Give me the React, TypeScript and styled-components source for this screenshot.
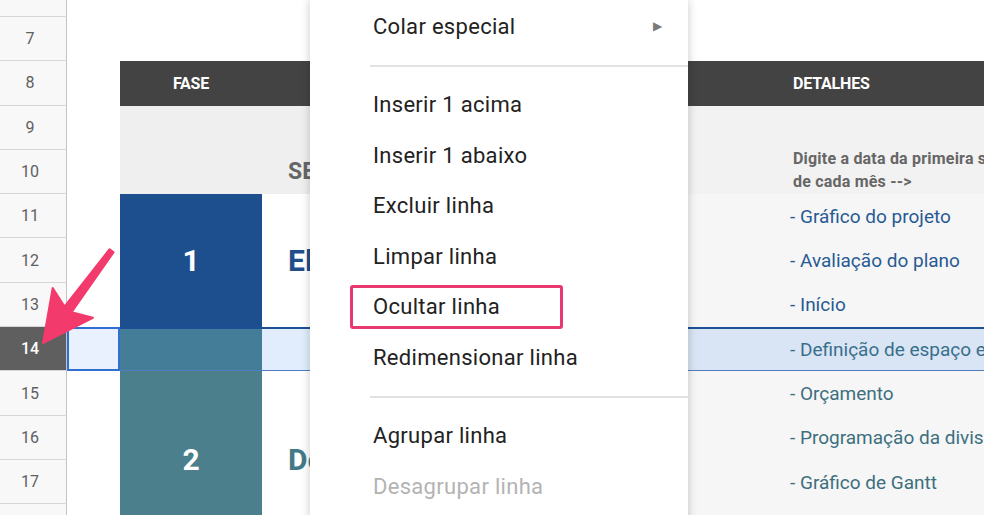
import React from 'react';
import styled, { createGlobalStyle } from 'styled-components';

const GlobalStyle = createGlobalStyle`
  html, body {
    margin: 0;
    padding: 0;
    background: #ffffff;
  }
  body {
    font-family: Roboto, "Liberation Sans", Arial, sans-serif;
    overflow: hidden;
  }
`;

// sheet row n sits on grid row n - 5 (row 6 is the cut-off one at the top)
const g = (row: number) => row - 5;

const Screen = styled.div`
  position: relative;
  width: 984px;
  height: 515px;
  overflow: hidden;
  background: #fff;
`;

// columns: row numbers, A, B (fase), C (visible sliver left of the menu), hidden, D (detalhes)
const Sheet = styled.div`
  display: grid;
  grid-template-columns: 67px 53px 142px 48px 470px 420px;
  grid-template-rows: 17px repeat(13, 44.3px);
`;

const RowHead = styled.div<{ $row: number; $active?: boolean }>`
  grid-column: 1;
  grid-row: ${p => g(p.$row)};
  box-sizing: border-box;
  display: flex;
  align-items: center;
  justify-content: center;
  padding-right: 6px;
  font-size: 16px;
  color: ${p => (p.$active ? '#ffffff' : '#5f5f5f')};
  font-weight: ${p => (p.$active ? 500 : 400)};
  background: ${p => (p.$active ? '#5f5f5f' : '#f8f8f8')};
  border-bottom: 1px solid #d6d6d6;
  border-right: 1px solid #c4c4c4;
  overflow: hidden;
`;

const HeaderCell = styled.div<{ $col: string; $center?: boolean }>`
  grid-row: ${g(8)};
  grid-column: ${p => p.$col};
  background: #434343;
  color: #ffffff;
  font-weight: 700;
  font-size: 16px;
  letter-spacing: -0.2px;
  display: flex;
  align-items: center;
  justify-content: ${p => (p.$center ? 'center' : 'flex-start')};
  padding-left: ${p => (p.$center ? '0' : '13px')};
`;

const BandCell = styled.div<{ $col: string; $bg: string }>`
  grid-row: ${g(9)} / span 2;
  grid-column: ${p => p.$col};
  background: ${p => p.$bg};
  display: flex;
  flex-direction: column;
  justify-content: flex-end;
  overflow: hidden;
  white-space: nowrap;
`;

const BandTitle = styled.span`
  font-size: 23px;
  font-weight: 700;
  color: #666666;
  line-height: 28px;
  padding: 0 0 8px 26px;
`;

const BandNote = styled.span`
  font-size: 16px;
  font-weight: 700;
  color: #666666;
  line-height: 22px;
  letter-spacing: 0.2px;
  padding: 0 0 1px 13px;
`;

const PhaseCell = styled.div<{ $row: number; $span: number; $bg: string }>`
  grid-column: 3;
  grid-row: ${p => g(p.$row)} / span ${p => p.$span};
  background: ${p => p.$bg};
  color: #ffffff;
  font-size: 30px;
  font-weight: 700;
  display: flex;
  align-items: center;
  justify-content: center;
`;

const TitleCell = styled.div<{ $row: number; $span: number; $color: string }>`
  grid-column: 4;
  grid-row: ${p => g(p.$row)} / span ${p => p.$span};
  color: ${p => p.$color};
  font-size: 30px;
  font-weight: 700;
  display: flex;
  align-items: center;
  padding-left: 26px;
  white-space: nowrap;
  overflow: hidden;
`;

const DetailCell = styled.div<{ $row: number; $color: string }>`
  grid-column: 6;
  grid-row: ${p => g(p.$row)};
  background: #f6f6f6;
  color: ${p => p.$color};
  font-size: 19px;
  display: flex;
  align-items: center;
  padding-left: 10px;
  white-space: nowrap;
`;

const GreyFill = styled.div<{ $col: number; $from: number; $to: number }>`
  grid-column: ${p => p.$col};
  grid-row: ${p => g(p.$from)} / ${p => g(p.$to) + 1};
  background: #f6f6f6;
`;

const Selection = styled.div`
  grid-column: 2 / -1;
  grid-row: ${g(14)};
  z-index: 1;
  box-sizing: border-box;
  background: rgba(26, 115, 232, 0.13);
  border-top: 2px solid #1d4f97;
  border-bottom: 1px solid #4f7fc2;
`;

const ActiveCell = styled.div`
  grid-column: 2;
  grid-row: ${g(14)};
  z-index: 2;
  box-sizing: border-box;
  border: 2px solid #2f6fd2;
  background: rgba(255, 255, 255, 0.25);
`;

const Menu = styled.div`
  position: absolute;
  left: 310px;
  top: 0;
  width: 378px;
  height: 530px;
  z-index: 5;
  background: #ffffff;
  box-shadow: 0 0 9px rgba(0, 0, 0, 0.22);
  padding-top: 1px;
  box-sizing: border-box;
  font-size: 22px;
  letter-spacing: 0.3px;
`;

const MenuItem = styled.div<{ $disabled?: boolean }>`
  position: relative;
  height: 50.5px;
  display: flex;
  align-items: center;
  justify-content: space-between;
  padding: 0 26px 0 63px;
  color: ${p => (p.$disabled ? '#b3b3b3' : '#222222')};
`;

const SubArrow = styled.span`
  font-size: 12px;
  color: #7a7a7a;
`;

const Separator = styled.div`
  height: 2px;
  margin: 13px 0 13px 60px;
  background: #e2e2e2;
`;

const Highlight = styled.div`
  position: absolute;
  left: 40px;
  top: 3px;
  width: 213px;
  height: 44px;
  box-sizing: border-box;
  border: 3px solid #e8386f;
  border-radius: 3px;
`;

const Pointer = styled.svg`
  position: absolute;
  left: 30px;
  top: 240px;
  z-index: 6;
`;

const BLUE_TEXT = '#285a94';
const TEAL_TEXT = '#3d6f7e';

const details = [
  { row: 11, text: '- Gráfico do projeto', color: BLUE_TEXT },
  { row: 12, text: '- Avaliação do plano', color: BLUE_TEXT },
  { row: 13, text: '- Início', color: BLUE_TEXT },
  { row: 14, text: '- Definição de espaço e tarefas', color: TEAL_TEXT },
  { row: 15, text: '- Orçamento', color: TEAL_TEXT },
  { row: 16, text: '- Programação da divisão', color: TEAL_TEXT },
  { row: 17, text: '- Gráfico de Gantt', color: TEAL_TEXT },
];

const rows = [6, 7, 8, 9, 10, 11, 12, 13, 14, 15, 16, 17, 18, 19];

const App = () => {
  return (
    <Screen>
      <GlobalStyle />
      <Sheet>
        {rows.map(r => (
          <RowHead key={r} $row={r} $active={r === 14}>
            {r > 6 ? r : ''}
          </RowHead>
        ))}

        <HeaderCell $col="3" $center>FASE</HeaderCell>
        <HeaderCell $col="4 / span 2" />
        <HeaderCell $col="6">DETALHES</HeaderCell>

        <BandCell $col="3" $bg="#efefef" />
        <BandCell $col="4" $bg="#efefef">
          <BandTitle>SEMANA</BandTitle>
        </BandCell>
        <BandCell $col="5" $bg="#f2f2f2" />
        <BandCell $col="6" $bg="#f2f2f2">
          <BandNote>Digite a data da primeira semana</BandNote>
          <BandNote>de cada mês --&gt;</BandNote>
        </BandCell>

        <PhaseCell $row={11} $span={3} $bg="#1d4f8e">1</PhaseCell>
        <TitleCell $row={11} $span={3} $color="#1f4e8b">Elaboração</TitleCell>
        <PhaseCell $row={14} $span={6} $bg="#4a7f8b">2</PhaseCell>
        <TitleCell $row={14} $span={6} $color="#437a87">Desenvolvimento</TitleCell>

        {details.map(d => (
          <DetailCell key={d.row} $row={d.row} $color={d.color}>
            {d.text}
          </DetailCell>
        ))}
        <GreyFill $col={5} $from={11} $to={19} />
        <GreyFill $col={6} $from={18} $to={19} />

        <Selection />
        <ActiveCell />
      </Sheet>

      <Menu>
        <MenuItem>
          Colar especial
          <SubArrow>▶</SubArrow>
        </MenuItem>
        <Separator />
        <MenuItem>Inserir 1 acima</MenuItem>
        <MenuItem>Inserir 1 abaixo</MenuItem>
        <MenuItem>Excluir linha</MenuItem>
        <MenuItem>Limpar linha</MenuItem>
        <MenuItem>
          Ocultar linha
          <Highlight />
        </MenuItem>
        <MenuItem>Redimensionar linha</MenuItem>
        <Separator />
        <MenuItem>Agrupar linha</MenuItem>
        <MenuItem $disabled>Desagrupar linha</MenuItem>
      </Menu>

      <Pointer width="95" height="115" viewBox="0 0 95 115">
        <polygon
          points="13,103 22.7,48 34.5,66.5 79.6,9.2 83.6,12.2 41.6,72.1 62.9,77.75"
          fill="#f23a6c"
          stroke="#f23a6c"
          strokeWidth="2"
          strokeLinejoin="round"
        />
      </Pointer>
    </Screen>
  );
};

export default App;
